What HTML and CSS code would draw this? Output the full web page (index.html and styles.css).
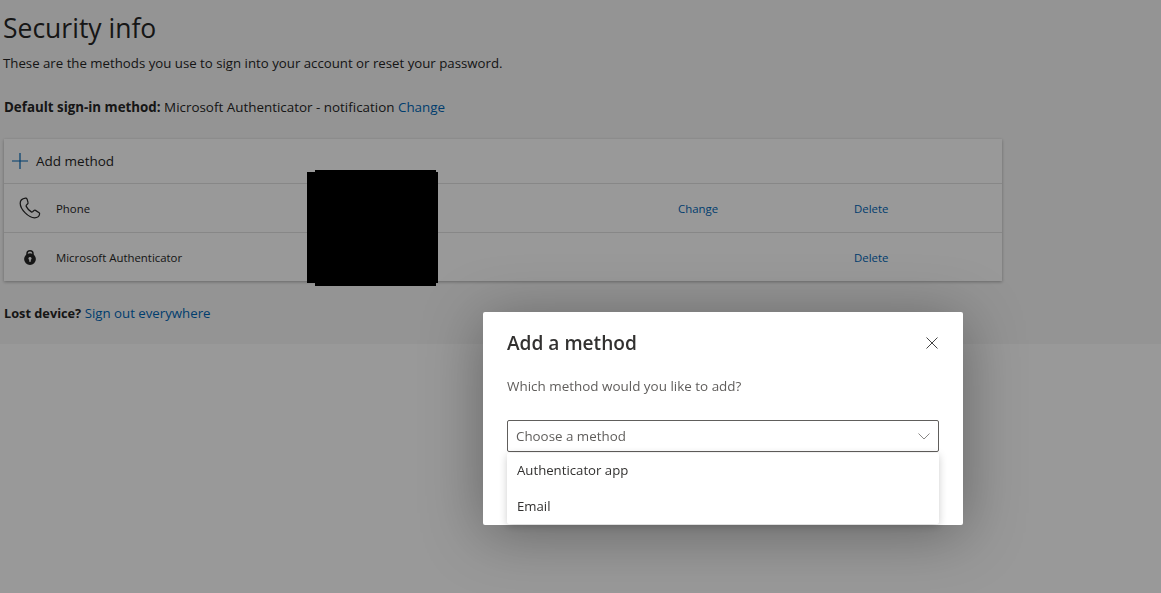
FILE: index.html
```html
<!DOCTYPE html>
<html lang="en">
<head>
<meta charset="utf-8">
<title>Security info</title>
<link rel="stylesheet" href="styles.css">
</head>
<body>
<main class="page">
  <h1 class="title">Security info</h1>
  <p class="subtitle">These are the methods you use to sign into your account or reset your password.</p>
  <p class="default-method"><strong>Default sign-in method:</strong> Microsoft Authenticator - notification <a href="#">Change</a></p>
  <section class="card">
    <div class="add-row">
      <svg class="plus" viewBox="0 0 16 16" aria-hidden="true"><path d="M8 0v16M0 8h16"/></svg>
      <span>Add method</span>
    </div>
    <div class="method-row">
      <svg class="icon-phone" viewBox="0 0 22 22" aria-hidden="true"><path d="M6.500 1.200C3.500 1.600 1.200 3.600 1.200 6.300c0 3 2 6.600 5 9.600 3 3 6.600 4.900 9.400 4.900 2.600 0 4.600-1.600 5-3.800.1-.6-.1-1-.5-1.300l-3.600-2.300c-.5-.3-1-.3-1.500.1l-1.400 1.300c-.4.3-.8.4-1.300.1-2.200-1.300-3.900-3.200-5.100-5.500-.2-.5-.1-.9.2-1.300l1.300-1.300c.4-.4.5-.9.3-1.400L8.100 2.200c-.3-.7-.9-1.100-1.600-1z"/></svg>
      <span class="method-name">Phone</span>
      <a class="col-change" href="#">Change</a>
      <a class="col-delete" href="#">Delete</a>
    </div>
    <div class="method-row">
      <svg class="icon-lock" viewBox="0 0 12 15" aria-hidden="true"><path class="shackle" d="M3 6V3.800a3 3 0 0 1 6 0V6"/><path class="body" fill-rule="evenodd" d="M6 3.200a5.900 5.900 0 0 1 0 11.800 5.900 5.900 0 0 1 0-11.800zM6 6.900a1.500 1.500 0 0 0-.8 2.800v2h1.600v-2A1.500 1.500 0 0 0 6 6.900z"/></svg>
      <span class="method-name">Microsoft Authenticator</span>
      <a class="col-delete" href="#">Delete</a>
    </div>
    <div class="redaction" aria-hidden="true"></div>
  </section>
  <p class="lost"><strong>Lost device?</strong> <a href="#">Sign out everywhere</a></p>
</main>
<div class="overlay"></div>
<div class="dialog" role="dialog" aria-label="Add a method">
  <header class="dialog-head">
    <h2>Add a method</h2>
    <svg class="close" viewBox="0 0 12 12" aria-hidden="true"><path d="M.5.5l11 11M11.500.5l-11 11"/></svg>
  </header>
  <p class="dialog-text">Which method would you like to add?</p>
  <div class="select-wrap">
    <div class="select">
      <span>Choose a method</span>
      <svg class="chevron" viewBox="0 0 12 7" aria-hidden="true"><path d="M.5.500L6 6l5.500-5.500"/></svg>
    </div>
    <ul class="options">
      <li>Authenticator app</li>
      <li>Email</li>
    </ul>
  </div>
</div>
</body>
</html>
```
FILE: styles.css
```css
* { box-sizing: border-box; }
html, body { margin: 0; height: 100%; }
body {
  background: #fff;
  color: #262626;
  font-family: "Open Sans", "Liberation Sans", sans-serif;
  font-size: 13px;
  overflow: hidden;
}
a { color: #0067b8; text-decoration: none; }
strong { font-weight: 700; }

.page {
  height: 344px;
  padding: 10px 159px 0 4px;
  background: #f7f7f7;
  display: flex;
  flex-direction: column;
}
.title {
  margin: 0 0 0 -1px;
  font-size: 26.5px;
  font-weight: 400;
  line-height: 36px;
}
.subtitle { margin: 8px 0 0 -1px; line-height: 18px; font-size: 13.24px; }
.default-method { margin: 26px 0 0; line-height: 18px; font-size: 13.42px; }
.default-method strong { font-size: 13.33px; }

.card {
  position: relative;
  margin-top: 23px;
  background: #fff;
  box-shadow: 0 1px 3px rgba(0,0,0,.3);
  width: 998px;
}
.add-row {
  display: flex;
  align-items: center;
  gap: 8px;
  height: 44px;
  padding-left: 8px;
  font-size: 13.5px;
}
.plus { width: 16px; height: 16px; stroke: #0067b8; stroke-width: 1.2; fill: none; }
.method-row {
  display: grid;
  grid-template-columns: 52px 622px 176px 1fr;
  align-items: center;
  height: 49px;
  border-top: 1px solid #e1e1e1;
  font-size: 11.4px;
}
.method-row svg { justify-self: center; }
.method-row .col-change { grid-column: 3; }
.method-row .col-delete { grid-column: 4; }
.icon-phone { width: 22px; height: 22px; fill: none; stroke: #262626; stroke-width: 1.25; }
.icon-lock { width: 12px; height: 15px; fill: #262626; }
.icon-lock .shackle { fill: none; stroke: #262626; stroke-width: 1.5; }
.redaction {
  position: absolute;
  left: 303px;
  top: 31px;
  width: 131px;
  height: 116px;
  background: #000;
  clip-path: polygon(8px 0, 129px 0, 129px 2px, 131px 2px, 131px 113px, 129px 113px, 129px 116px, 8px 116px, 8px 113px, 0 113px, 0 2px, 8px 2px);
}
.lost { margin: 23px 0 0; line-height: 18px; font-size: 13.25px; }
.lost strong { font-size: 12.75px; }

.overlay { position: fixed; inset: 0; background: rgba(0,0,0,.4); }
.dialog {
  position: absolute;
  left: 483px;
  top: 312px;
  width: 480px;
  height: 213px;
  padding: 15px 24px 0;
  background: #fff;
  box-shadow: 0 8px 60px rgba(0,0,0,.35);
  border-radius: 2px;
}
.dialog-head {
  display: flex;
  align-items: center;
  justify-content: space-between;
  height: 31px;
}
.dialog-head h2 {
  align-self: flex-start;
  margin: 0;
  padding-top: 1px;
  font-size: 19.1px;
  font-weight: 600;
  color: #323130;
  line-height: 31px;
}
.close { width: 12px; height: 12px; stroke: #444; stroke-width: 1; fill: none; margin-right: 1px; }
.dialog-text { margin: 0; padding-top: 18px; line-height: 20px; color: #605e5c; font-size: 13.45px; }
.select-wrap { position: relative; margin-top: 24px; }
.select {
  display: flex;
  align-items: center;
  justify-content: space-between;
  height: 32px;
  padding: 0 8px;
  border: 1px solid #605e5c;
  border-radius: 2px;
  color: #605e5c;
  font-size: 13.35px;
}
.chevron { width: 12px; height: 7px; stroke: #8a8886; stroke-width: 1; fill: none; }
.options {
  position: absolute;
  left: 0; right: 0; top: 33px;
  margin: 0;
  padding: 0;
  list-style: none;
  background: #fff;
  height: 71px;
  box-shadow: 0 2px 8px rgba(0,0,0,.2);
  border-radius: 2px;
  color: #323130;
  font-size: 13.2px;
}
.options li { height: 36px; line-height: 34px; padding-left: 10px; }
```
